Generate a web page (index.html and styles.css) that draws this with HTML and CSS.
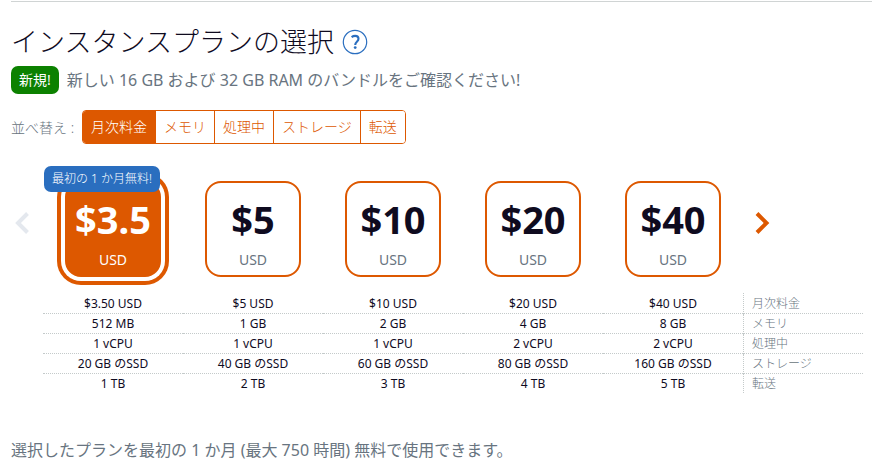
FILE: index.html
```html
<!DOCTYPE html>
<html lang="ja">
<head>
<meta charset="utf-8">
<meta name="viewport" content="width=device-width, initial-scale=1">
<title>インスタンスプランの選択</title>
<link rel="stylesheet" href="styles.css">
</head>
<body>
<main class="plans">
  <header class="heading">
    <h1>インスタンスプランの選択</h1>
    <button class="help" type="button" aria-label="ヘルプ">
      <svg viewBox="0 0 26 26" width="26" height="26" fill="none" stroke="#2a6ebf">
        <circle cx="13" cy="13" r="11.7" stroke-width="1.2"/>
        <path d="M9.6 8.1C10.8 7.2 12 6.9 13.2 6.9c2 0 3.3 1.1 3.3 2.9 0 3-3.3 3-3.3 6.1" stroke-width="2.1"/>
        <circle cx="13.2" cy="18.6" r="1.4" fill="#2a6ebf" stroke="none"/>
      </svg>
    </button>
  </header>

  <p class="notice"><span class="new">新規!</span><span>新しい 16 GB および 32 GB RAM のバンドルをご確認ください!</span></p>

  <div class="sort" role="group" aria-labelledby="sort-label">
    <span id="sort-label">並べ替え :</span>
    <div class="tabs">
      <button class="tab active" type="button" aria-pressed="true">月次料金</button>
      <button class="tab" type="button" aria-pressed="false">メモリ</button>
      <button class="tab" type="button" aria-pressed="false">処理中</button>
      <button class="tab" type="button" aria-pressed="false">ストレージ</button>
      <button class="tab" type="button" aria-pressed="false">転送</button>
    </div>
  </div>

  <div class="carousel">
    <button class="arrow prev" type="button" aria-label="前へ" disabled>
      <svg viewBox="0 0 16 24" width="16" height="24" fill="none" stroke="currentColor" stroke-width="4"><path d="M12.5 2.5 3 12l9.5 9.5"/></svg>
    </button>
    <div class="cards">
      <div class="slot">
        <button class="card selected" type="button" aria-pressed="true"><strong>$3.5</strong><span>USD</span></button>
        <span class="free">最初の 1 か月無料!</span>
      </div>
      <div class="slot"><button class="card" type="button" aria-pressed="false"><strong>$5</strong><span>USD</span></button></div>
      <div class="slot"><button class="card" type="button" aria-pressed="false"><strong>$10</strong><span>USD</span></button></div>
      <div class="slot"><button class="card" type="button" aria-pressed="false"><strong>$20</strong><span>USD</span></button></div>
      <div class="slot"><button class="card" type="button" aria-pressed="false"><strong>$40</strong><span>USD</span></button></div>
    </div>
    <button class="arrow next" type="button" aria-label="次へ">
      <svg viewBox="0 0 16 24" width="16" height="24" fill="none" stroke="currentColor" stroke-width="4"><path d="M2 2.5 11.5 12 2 21.5"/></svg>
    </button>
  </div>

  <div class="specs">
    <table>
      <colgroup><col><col><col><col><col><col class="names"></colgroup>
      <tbody>
        <tr><td>$3.50 USD</td><td>$5 USD</td><td>$10 USD</td><td>$20 USD</td><td>$40 USD</td><th scope="row">月次料金</th></tr>
        <tr><td>512 MB</td><td>1 GB</td><td>2 GB</td><td>4 GB</td><td>8 GB</td><th scope="row">メモリ</th></tr>
        <tr><td>1 vCPU</td><td>1 vCPU</td><td>1 vCPU</td><td>2 vCPU</td><td>2 vCPU</td><th scope="row">処理中</th></tr>
        <tr><td>20 GB のSSD</td><td>40 GB のSSD</td><td>60 GB のSSD</td><td>80 GB のSSD</td><td>160 GB のSSD</td><th scope="row">ストレージ</th></tr>
        <tr><td>1 TB</td><td>2 TB</td><td>3 TB</td><td>4 TB</td><td>5 TB</td><th scope="row">転送</th></tr>
      </tbody>
    </table>
  </div>

  <p class="footnote">選択したプランを最初の 1 か月 (最大 750 時間) 無料で使用できます。</p>
</main>
</body>
</html>
```
FILE: styles.css
```css
:root {
  --orange: #dd5800;
  --blue: #2a6ebf;
  --ink: #0f0b1f;
  --gray: #687480;
}

* {
  box-sizing: border-box;
}

body {
  margin: 0;
  background: #fff;
  color: var(--gray);
  font-family: "Noto Sans", "Noto Sans CJK JP", sans-serif;
  font-weight: 400;
}

button {
  font: inherit;
  cursor: pointer;
}

svg {
  display: block;
}

h1,
p {
  margin: 0;
}

.plans {
  margin: 1px 0 0 11px;
  border-top: 1px solid #d0d4d4;
}

.heading {
  display: flex;
  align-items: center;
  gap: 8px;
  height: 40px;
  margin-top: 20px;
}

h1 {
  color: var(--ink);
  font-size: 27px;
  font-weight: 300;
  line-height: 40px;
}

.help {
  padding: 0;
  border: 0;
  background: none;
}

.notice {
  display: flex;
  align-items: center;
  gap: 8px;
  margin-top: 4px;
  font-size: 16px;
  line-height: 28px;
}

.new {
  padding: 0 8px;
  border-radius: 7px;
  background: #0c8100;
  color: #fff;
  font-size: 14px;
}

.sort {
  display: flex;
  align-items: center;
  gap: 8px;
  margin-top: 16px;
  font-size: 14px;
  font-weight: 300;
}

.tabs {
  display: flex;
  border: 1px solid var(--orange);
  border-radius: 4px;
  overflow: hidden;
}

.tab {
  height: 32px;
  padding: 0 8px 2px;
  border: 0;
  background: #fff;
  color: var(--orange);
}

.tab + .tab {
  border-left: 1px solid var(--orange);
}

.tab.active {
  background: var(--orange);
  color: #fff;
}

.carousel {
  display: grid;
  grid-template-columns: 32px 1fr 120px;
  align-items: center;
  margin: 37px 9px 0 0;
}

.arrow {
  justify-self: start;
  margin-bottom: 12px;
  padding: 4px;
  border: 0;
  background: none;
}

.prev {
  color: #e4e8ee;
}

.next {
  margin-left: 8px;
  color: var(--orange);
}

.cards {
  display: grid;
  grid-template-columns: repeat(5, 1fr);
}

.slot {
  position: relative;
  display: flex;
  justify-content: center;
}

.card {
  display: flex;
  flex-direction: column;
  align-items: center;
  justify-content: space-between;
  width: 96px;
  height: 96px;
  padding: 12px 0 5px;
  border: 2px solid var(--orange);
  border-radius: 16px;
  background: #fff;
  color: var(--gray);
  font-size: 14px;
  line-height: 20px;
}

.card strong {
  color: var(--ink);
  font-size: 38px;
  font-weight: 700;
  line-height: 48px;
}

.card.selected {
  background: var(--orange);
  box-shadow: 0 0 0 4px #fff, 0 0 0 8px var(--orange);
  color: #fff;
}

.card.selected strong {
  color: #fff;
}

.free {
  position: absolute;
  top: -15px;
  left: 1px;
  padding: 0 8px;
  border-radius: 7px;
  background: var(--blue);
  color: #fff;
  font-size: 12px;
  font-weight: 300;
  line-height: 26px;
  white-space: nowrap;
}

.specs {
  margin: 16px 9px 0 32px;
}

table {
  width: 100%;
  table-layout: fixed;
  border-collapse: separate;
  border-spacing: 0;
  color: var(--ink);
  font-size: 12px;
  line-height: 19px;
}

.names {
  width: 120px;
}

td,
th {
  padding: 0;
  border-bottom: 1px dotted #c4caca;
  text-align: center;
  font-weight: 400;
}

th {
  padding-left: 8px;
  border-left: 1px dotted #c4caca;
  color: var(--gray);
  text-align: left;
  font-weight: 300;
}

tr:first-child td,
tr:first-child th {
  height: 21px;
}

tr:last-child td,
tr:last-child th {
  border-bottom: 0;
}

.footnote {
  margin-top: 45px;
  font-size: 16px;
  line-height: 24px;
}
```
